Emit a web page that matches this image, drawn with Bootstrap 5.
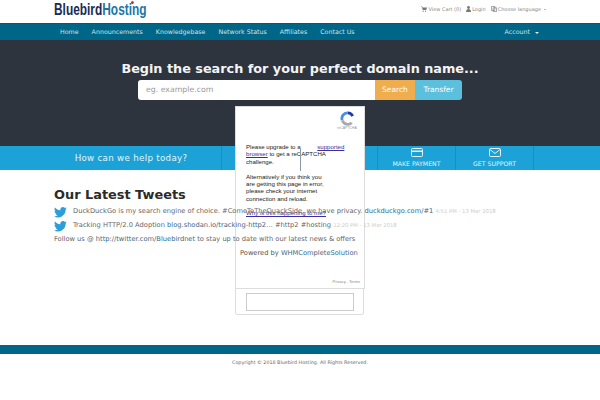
<!DOCTYPE html>
<html lang="en">
<head>
  <meta charset="UTF-8">
  <title>Bluebird Hosting</title>
  <link href="https://cdn.jsdelivr.net/npm/bootstrap@5.3.0/dist/css/bootstrap.min.css" rel="stylesheet">
  <style>
    body { position: relative; width: 600px; height: 400px; overflow: hidden; font-family: "DejaVu Sans", sans-serif; font-size: 8px; color: #444; background: #fff; }
    a { text-decoration: none; }
    .wrap { width: 492px; margin: 0 auto; }
    .top-bar { height: 23px; }
    .brand-logo { position: relative; display: block; width: 125px; height: 20px; font-family: "Liberation Sans", sans-serif; font-size: 17px; font-weight: 700; line-height: 20px; color: #1b2a55; white-space: nowrap; transform: scaleX(.7); transform-origin: left top; }
    .brand-logo span { color: #1b76a8; }
    .logo-dot { position: absolute; left: 110px; top: 1px; width: 4px; height: 3px; border-radius: 50%; background: #d8232a; }
    .top-links { font-size: 5px; line-height: 8px; color: #888; gap: 5px; padding-top: 5px; }
    .top-links svg { vertical-align: -1px; margin-right: 1px; }
    .top-caret { display: inline-block; width: 0; height: 0; border: 1.500px solid transparent; border-top-color: #777; border-bottom: 0; margin-left: 3px; vertical-align: middle; }
    .main-nav { height: 17px; background: #006687; color: #cfe3ea; font-size: 6.300px; border-top: 1px solid #04597a; }
    .main-nav .nav-links { gap: 13px; padding-left: 6px; }
    .account-link { padding-right: 7px; }
    .caret-down { display: inline-block; width: 0; height: 0; border: 2px solid transparent; border-top-color: #dfeef3; border-bottom: 0; margin-left: 3px; vertical-align: middle; }
    .hero-band { height: 106px; background: #2e343e; padding-top: 19px; }
    .hero-band h1 { color: #f4f4f4; font-size: 12.800px; font-weight: 700; line-height: 20px; margin: 0 0 1px; text-align: center; }
    .search-group { width: 324px; height: 20px; margin: 0 auto; border-radius: 3px; overflow: hidden; font-size: 7.800px; }
    .search-box { flex: 1; background: #fff; color: #999; padding: 0 8px; line-height: 20px; }
    .btn-search, .btn-transfer { color: #fff; line-height: 20px; text-align: center; font-size: 7.500px; }
    .btn-search { width: 40px; background: #f0ad4e; }
    .btn-transfer { width: 47px; background: #5bc0de; }
    .help-band { height: 24px; background: #1ca2d6; color: #e4f4fa; }
    .help-title { width: 167px; padding-right: 13px; font-size: 8.700px; letter-spacing: .3px; line-height: 24px; text-align: center; }
    .help-item { width: 78px; border-left: 1px solid #1a8fbd; text-align: center; font-size: 6.200px; line-height: 8px; padding-top: 2px; height: 24px; }
    .help-item svg { display: block; margin: 0 auto 3px; }
    .help-end { border-left: 1px solid #1a8fbd; height: 24px; }
    .tweets-block { position: relative; z-index: 2; }
    .tweets-title { font-size: 12.900px; font-weight: 700; color: #2b2b2b; line-height: 18px; margin: 16px 0 0; }
    .tweet-row { height: 14px; line-height: 14px; white-space: nowrap; color: #666; font-size: 6.700px; }
    .tweet-row svg { flex: none; width: 13px; height: 11px; margin: 3px 6px 0 0; }
    .tweet-row a, .follow-row a { color: #3a6a86; }
    .tweet-time { color: #ccc; font-size: 5.300px; }
    .follow-row { font-size: 6.700px; line-height: 14px; color: #666; white-space: nowrap; }
    .foot-bar { position: absolute; left: 0; right: 0; top: 345px; height: 9px; background: #006687; }
    .copy-text { position: absolute; left: 0; right: 0; top: 359px; text-align: center; font-size: 4.800px; line-height: 8px; color: #666; }
    .captcha-box { position: absolute; left: 235px; top: 106px; width: 130px; height: 183px; background: #fff; border: 1px solid #ddd; font-family: "Liberation Sans", sans-serif; font-size: 6.100px; line-height: 7.400px; color: #222; }
    .captcha-msg { position: absolute; left: 10px; top: 36px; white-space: nowrap; }
    .captcha-msg p { margin: 0 0 7.400px; }
    .captcha-msg a { color: #3b2fa0; text-decoration: underline; }
    .captcha-gap { margin-left: 15px; }
    .captcha-rule { position: absolute; left: 64px; top: 42px; width: 1px; height: 22px; background: #8a9aa6; }
    .captcha-logo { position: absolute; right: 5px; top: 4px; width: 24px; text-align: center; font-size: 3.500px; line-height: 5px; color: #999; }
    .captcha-logo svg { display: block; margin: 0 auto; }
    .captcha-why { position: absolute; left: 10px; top: 102px; white-space: nowrap; }
    .captcha-why a { color: #3b2fa0; text-decoration: underline; }
    .powered-line { position: relative; z-index: 3; font-size: 6.700px; line-height: 10px; color: #555; white-space: nowrap; margin: 2px 0 0 186px; }
    .powered-line a { color: #3a6a86; }
    .captcha-terms { position: absolute; right: 4px; top: 172px; font-size: 4px; line-height: 5px; color: #888; }
    .captcha-foot { position: absolute; left: 235px; top: 288px; width: 129px; height: 27px; background: #fff; border: 1px solid #ddd; border-radius: 0 0 2px 2px; }
    .captcha-input { display: block; width: 108px; height: 18px; margin: 4px auto 0; border: 1px solid #ccc; }
  </style>
</head>
<body>

<div class="wrap top-bar d-flex justify-content-between">
  <a class="brand-logo" href="#">Bluebird<span>Hosting</span><i class="logo-dot"></i></a>
  <div class="top-links d-flex">
    <span><svg width="6" height="6" viewBox="0 0 6 6"><path fill="#777" d="M0 .5h1.200l.3 1H6L5.200 4H1.800L.8 1H0z"/><circle cx="2.200" cy="5.200" r=".6" fill="#777"/><circle cx="4.600" cy="5.200" r=".6" fill="#777"/></svg>View Cart (0)</span>
    <span><svg width="5" height="6" viewBox="0 0 5 6"><circle cx="2.500" cy="1.500" r="1.400" fill="#777"/><path fill="#777" d="M0 6c0-2 1-3 2.500-3S5 4 5 6z"/></svg>Login</span>
    <span><svg width="6" height="6" viewBox="0 0 6 6"><path fill="none" stroke="#777" stroke-width=".7" d="M.4.4h3.400v4H.4zM2.200 1.800h3.400v3.800H2.200z"/></svg>Choose language<i class="top-caret"></i></span>
  </div>
</div>

<div class="main-nav">
  <div class="wrap d-flex justify-content-between align-items-center h-100">
    <div class="nav-links d-flex">
      <span>Home</span>
      <span>Announcements</span>
      <span>Knowledgebase</span>
      <span>Network Status</span>
      <span>Affiliates</span>
      <span>Contact Us</span>
    </div>
    <div class="account-link">Account <i class="caret-down"></i></div>
  </div>
</div>

<div class="hero-band">
  <h1>Begin the search for your perfect domain name...</h1>
  <div class="search-group d-flex">
    <div class="search-box">eg. example.com</div>
    <div class="btn-search">Search</div>
    <div class="btn-transfer">Transfer</div>
  </div>
</div>

<div class="help-band">
  <div class="wrap d-flex">
    <div class="help-title">How can we help today?</div>
    <div class="help-item"></div>
    <div class="help-item"></div>
    <div class="help-item">
      <svg width="12" height="9" viewBox="0 0 12 9"><rect x=".5" y=".5" width="11" height="8" rx="1" fill="none" stroke="#e4f4fa"/><rect x="1" y="2.500" width="10" height="1.500" fill="#e4f4fa"/></svg>
      MAKE PAYMENT
    </div>
    <div class="help-item">
      <svg width="12" height="9" viewBox="0 0 12 9"><rect x=".5" y=".5" width="11" height="8" rx="1" fill="none" stroke="#e4f4fa"/><path d="M1 1.500l5 4 5-4" fill="none" stroke="#e4f4fa"/></svg>
      GET SUPPORT
    </div>
    <div class="help-end"></div>
  </div>
</div>

<div class="captcha-box">
  <div class="captcha-logo">
    <svg width="15" height="15" viewBox="0 0 16 16"><path d="M8 2a6 6 0 0 1 5.500 3.500" fill="none" stroke="#1c3aa9" stroke-width="3"/><path d="M8 2a6 6 0 0 0-5.700 7.800" fill="none" stroke="#4a90e2" stroke-width="3"/><path d="M2.500 10a6 6 0 0 0 10 2.500" fill="none" stroke="#aaa" stroke-width="3"/></svg>
    reCAPTCHA
  </div>
  <div class="captcha-msg">
    <p>Please upgrade to a <a class="captcha-gap" href="#">supported</a><br><a href="#">browser</a> to get a reCAPTCHA<br>challenge.</p>
    <p>Alternatively if you think you<br>are getting this page in error,<br>please check your internet<br>connection and reload.</p>
  </div>
  <i class="captcha-rule"></i>
  <div class="captcha-why"><a href="#">Why is this happening to me?</a></div>
  <div class="captcha-terms">Privacy - Terms</div>
</div>
<div class="captcha-foot"><div class="captcha-input"></div></div>

<div class="wrap tweets-block">
  <h2 class="tweets-title">Our Latest Tweets</h2>
  <div class="tweet-row d-flex">
    <svg viewBox="0 0 24 20"><path fill="#2d9fd8" d="M24 2.400c-.9.4-1.800.7-2.800.8 1-.6 1.800-1.600 2.200-2.700-1 .6-2 1-3.100 1.200C19.300.7 18 0 16.600 0c-2.700 0-4.900 2.200-4.900 4.900 0 .4 0 .8.100 1.100C7.700 5.800 4.100 3.900 1.700.9c-.4.700-.7 1.600-.7 2.500 0 1.700.9 3.200 2.200 4.100-.8 0-1.600-.2-2.200-.6v.1c0 2.400 1.700 4.400 3.900 4.800-.4.100-.8.200-1.300.2-.3 0-.6 0-.9-.1.600 2 2.400 3.400 4.600 3.400-1.700 1.300-3.800 2.100-6.100 2.100-.4 0-.8 0-1.200-.1C2.200 18.300 4.800 19 7.500 19c9.100 0 14-7.500 14-14v-.6c1-.7 1.800-1.600 2.500-2z"/></svg>
    <span>DuckDuckGo is my search engine of choice. #ComeToTheQuackSide, we have privacy. <a href="#">duckduckgo.com/#1</a> <span class="tweet-time">4:51 PM - 13 Mar 2018</span></span>
  </div>
  <div class="tweet-row d-flex">
    <svg viewBox="0 0 24 20"><path fill="#2d9fd8" d="M24 2.400c-.9.4-1.800.7-2.800.8 1-.6 1.800-1.600 2.200-2.700-1 .6-2 1-3.100 1.200C19.300.7 18 0 16.600 0c-2.700 0-4.900 2.200-4.900 4.900 0 .4 0 .8.100 1.100C7.700 5.800 4.100 3.900 1.700.9c-.4.700-.7 1.600-.7 2.500 0 1.700.9 3.200 2.200 4.100-.8 0-1.600-.2-2.200-.6v.1c0 2.400 1.700 4.400 3.900 4.800-.4.100-.8.200-1.300.2-.3 0-.6 0-.9-.1.600 2 2.400 3.400 4.600 3.400-1.700 1.300-3.800 2.100-6.100 2.100-.4 0-.8 0-1.200-.1C2.200 18.300 4.800 19 7.500 19c9.100 0 14-7.500 14-14v-.6c1-.7 1.800-1.600 2.500-2z"/></svg>
    <span>Tracking HTTP/2.0 Adoption <a href="#">blog.shodan.io/tracking-http2…</a> #http2 #hosting <span class="tweet-time">12:20 PM - 13 Mar 2018</span></span>
  </div>
  <div class="follow-row">Follow us @ <a href="#">http://twitter.com/Bluebirdnet</a> to stay up to date with our latest news &amp; offers</div>
  <div class="powered-line">Powered by <a href="#">WHMCompleteSolution</a></div>
</div>

<div class="foot-bar"></div>
<div class="copy-text">Copyright © 2018 Bluebird Hosting. All Rights Reserved.</div>

<script src="https://cdn.jsdelivr.net/npm/bootstrap@5.3.0/dist/js/bootstrap.bundle.min.js"></script>
</body>
</html>
